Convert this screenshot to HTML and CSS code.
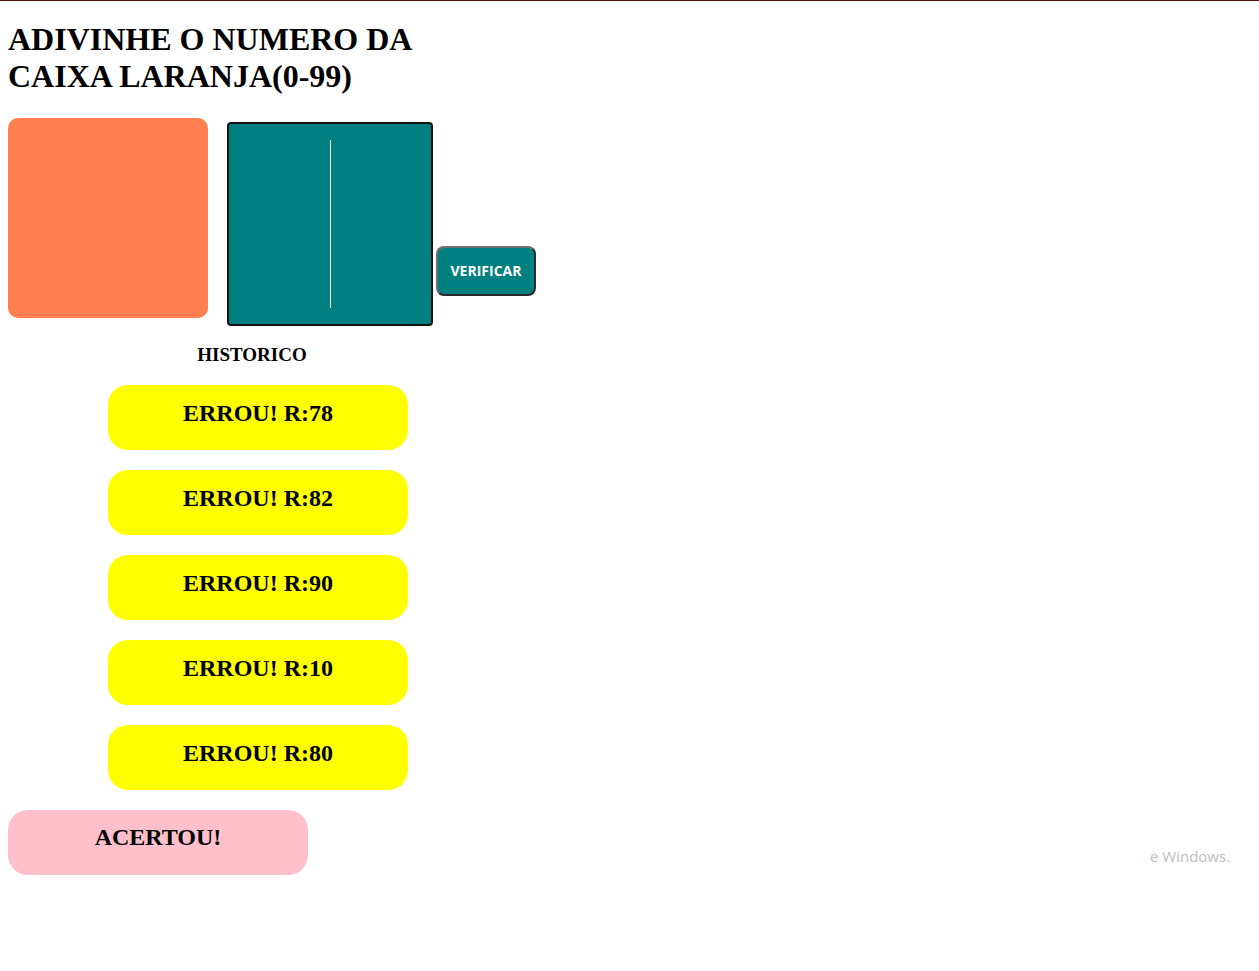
FILE: index.html
```html
<!DOCTYPE html>
<html lang="pt">
<head>
<meta charset="utf-8">
<title>Adivinhe o numero</title>
<link rel="stylesheet" href="styles.css">
</head>
<body>
  <h1 class="title">ADIVINHE O NUMERO DA CAIXA LARANJA(0-99)</h1>
  <div class="game">
    <div class="secret"></div>
    <div class="guess"><span class="caret"></span></div>
    <button class="verify" type="button">VERIFICAR</button>
  </div>
  <h3 class="history-title">HISTORICO</h3>
  <div class="history">
    <h2 class="result wrong">ERROU! R:78</h2>
    <h2 class="result wrong">ERROU! R:82</h2>
    <h2 class="result wrong">ERROU! R:90</h2>
    <h2 class="result wrong">ERROU! R:10</h2>
    <h2 class="result wrong">ERROU! R:80</h2>
    <h2 class="result right">ACERTOU!</h2>
  </div>
  <div class="watermark">e Windows.</div>
</body>
</html>
```
FILE: styles.css
```css
html {
  box-shadow: inset 0 1px 0 #5c0f0f;
  background: #ffffff;
}

body {
  margin: 0 8px 8px 8px;
  font-family: "Liberation Serif", "Times New Roman", serif;
  color: #000;
}

.title {
  font-size: 32px;
  font-weight: bold;
  line-height: normal;
  max-width: 420px;
  margin: 0 0 23px 0;
  padding-top: 20.5px;
}

.game {
  display: flex;
  align-items: flex-start;
}

.secret {
  width: 200px;
  height: 200px;
  background: #ff7f50;
  border-radius: 10px;
  flex: none;
}

.guess {
  box-sizing: border-box;
  width: 206px;
  height: 204px;
  margin: 4px 0 0 19px;
  background: #008080;
  border: 2px solid #111;
  border-radius: 4px;
  display: flex;
  justify-content: center;
  align-items: center;
  flex: none;
}

.caret {
  width: 1px;
  height: 168px;
  background: #ffffff;
}

.verify {
  box-sizing: border-box;
  width: 100px;
  height: 50px;
  margin: 128px 0 0 3px;
  padding: 0;
  background: #008080;
  color: #ffffff;
  font-family: "Open Sans", "Noto Sans", sans-serif;
  font-weight: 700;
  font-size: 14px;
  border-width: 2px;
  border-style: solid;
  border-color: #6f6f6f #2a2a2a #2a2a2a #6f6f6f;
  border-radius: 8px;
  flex: none;
}

.history-title {
  width: 488px;
  text-align: center;
  font-size: 19px;
  line-height: normal;
  margin: 18px 0 0 0;
}

.history {
  display: flex;
  flex-direction: column;
  align-items: flex-start;
}

.result {
  box-sizing: border-box;
  width: 300px;
  height: 65px;
  margin: 19.92px 0 0 0;
  padding-top: 14.5px;
  font-size: 24px;
  font-weight: bold;
  line-height: normal;
  text-align: center;
  border-radius: 20px;
}

.wrong {
  background: #ffff00;
  margin-left: 100px;
}

.right {
  background: #ffc0cb;
}

.watermark {
  position: absolute;
  left: 1150px;
  top: 846px;
  font-family: "Open Sans", "Noto Sans", sans-serif;
  font-size: 15px;
  color: #bdbdbd;
}
```
